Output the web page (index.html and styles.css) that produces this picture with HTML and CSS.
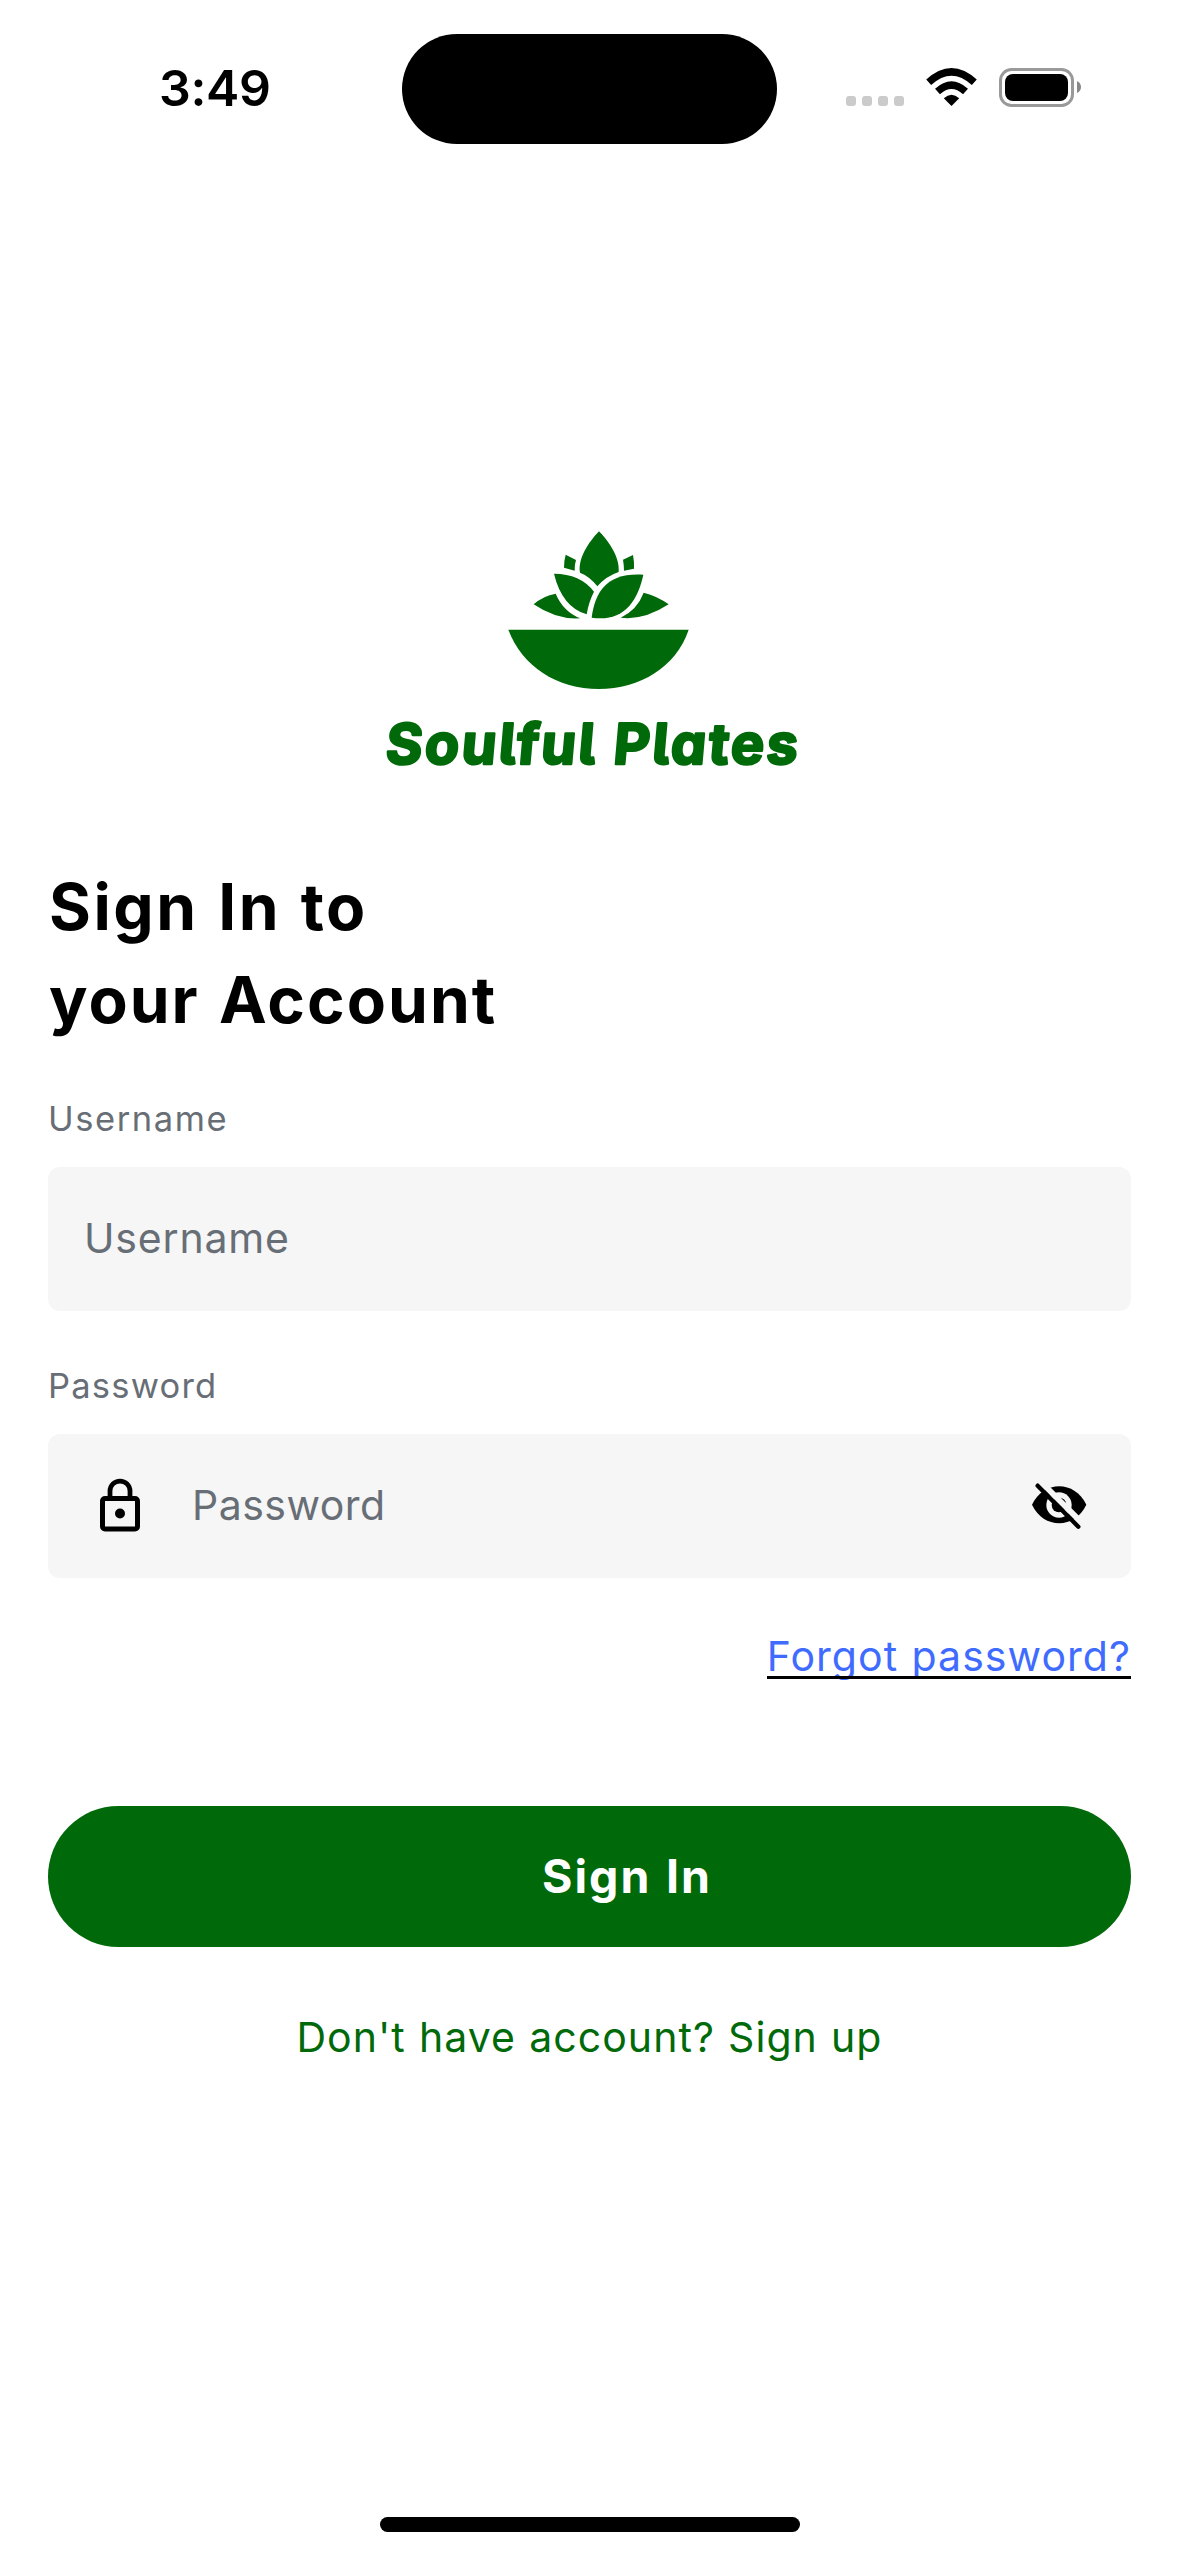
FILE: index.html
```
<!DOCTYPE html>
<html lang="en">
<head>
<meta charset="utf-8">
<title>Soulful Plates – Sign In</title>
<link rel="stylesheet" href="styles.css">
</head>
<body>
<div class="screen">
  <header class="status-bar">
    <span class="time">3:49</span>
    <div class="island"></div>
    <svg class="signals" viewBox="846 60 236 58" aria-hidden="true">
      <g fill="#cbcbcb">
        <rect x="846" y="96" width="10" height="10" rx="3"/>
        <rect x="862" y="96" width="10" height="10" rx="3"/>
        <rect x="878" y="96" width="10" height="10" rx="3"/>
        <rect x="894" y="96" width="10" height="10" rx="3"/>
      </g>
      <path d="M951.500 106L943.800 98.300Q951.500 91 959.200 98.300Z"/>
      <path d="M937.500 91.500Q951.500 78.700 965.500 91.500" fill="none" stroke="#000" stroke-width="7.300"/>
      <path d="M928.700 82.300Q951.500 61.400 974.300 82.300" fill="none" stroke="#000" stroke-width="7.300"/>
      <rect x="1000.500" y="69.500" width="72" height="36" rx="11" fill="none" stroke="#999" stroke-width="3"/>
      <rect x="1005" y="74" width="63" height="27" rx="8"/>
      <path d="M1077 81Q1081 83 1081 87T1077 93Z" fill="#888"/>
    </svg>
  </header>
  <main class="content">
    <svg class="logo" viewBox="360 510 459 280" role="img" aria-label="Soulful Plates">
      <g transform="translate(490 520) scale(.33333)">
        <path d="M327 34C308 54 262 108 270 158Q299 169 322 199Q349 168 386 156C391 108 348 55 327 34Z"/>
        <path d="M227 104L258 120Q253 136 254 152L222 143Q222 122 227 104Z"/>
        <path d="M429 105L399 119Q402 135 402 152L432 146Q433 124 429 105Z"/>
        <path d="M192 161Q271 161 312 215Q296 246 290 283Q216 261 192 161Z"/>
        <path d="M460 164C443 244 400 307 305 293C315 214 352 157 460 164Z"/>
        <path d="M131 253Q160 227 197 221Q220 275 271 295Q200 300 131 253Z"/>
        <path d="M536 253Q502 228 461 218Q442 269 392 293Q461 302 536 253Z"/>
        <path d="M55 329H596C559 440 450 507 326 507S97 440 55 329Z"/>
      </g>
      <text class="logo-name" transform="translate(384.500 764) skewX(-5)" textLength="412">Soulful Plates</text>
    </svg>
    <h1 class="title"><span class="title-lead">Sign In to</span><br>your Account</h1>
    <form class="form">
      <label class="label label-user">Username</label>
      <div class="field field-user"><span>Username</span></div>
      <label class="label label-pass">Password</label>
      <div class="field field-pass">
        <svg class="lock" viewBox="0 0 24 24" aria-hidden="true">
          <rect x="5" y="9" width="14" height="12.200" rx="1" fill="none" stroke="#000" stroke-width="2"/>
          <path d="M8 9V6a4 4 0 0 1 8 0V9" fill="none" stroke="#000" stroke-width="1.900"/>
          <circle cx="12" cy="15" r="2"/>
        </svg>
        <span class="field-text">Password</span>
        <svg class="eye" viewBox="0 0 270 216" aria-hidden="true">
          <path d="M51 104C85 30 180 30 214 104C180 178 85 178 51 104Z"/>
          <circle cx="132" cy="105" r="38" fill="#f6f6f6"/>
          <circle cx="132" cy="105" r="22"/>
          <path d="M78 36L205 163" stroke="#f6f6f6" stroke-width="18"/>
          <path d="M68 47L190 170" stroke="#000" stroke-width="13" stroke-linecap="round"/>
          <path d="M138 83Q149 88 154 99Z"/>
        </svg>
      </div>
      <a class="forgot">Forgot password?</a>
      <button class="submit" type="button">Sign In</button>
    </form>
    <a class="signup">Don't have account? Sign up</a>
  </main>
  <div class="home-indicator"></div>
</div>
</body>
</html>
```
FILE: styles.css
```
* { box-sizing: border-box; }

body {
  margin: 0;
  background: #fff;
  color: #000;
  font-family: Inter, "Liberation Sans", sans-serif;
}

.screen {
  display: flex;
  flex-direction: column;
  width: 1179px;
  height: 2556px;
  padding-bottom: 24px;
}

.status-bar {
  display: flex;
  align-items: center;
  height: 178px;
  padding-left: 159px;
}

.time {
  width: 243px;
  padding-bottom: 2px;
  font-size: 50px;
  font-weight: 600;
  line-height: 60px;
  letter-spacing: -0.35px;
}

.island {
  width: 375px;
  height: 110px;
  border-radius: 55px;
  background: #000;
}

.signals {
  width: 236px;
  height: 58px;
  margin-left: 69px;
}

.content {
  display: flex;
  flex-direction: column;
  padding: 332px 48px 0;
}

.logo {
  align-self: center;
  width: 459px;
  height: 280px;
  fill: #006909;
}

.logo-name {
  font: 650 56px Inter, "Open Sans", sans-serif;
  font-feature-settings: "cv11", "cv05";
  stroke: #006909;
  stroke-width: 2.5px;
  stroke-linejoin: round;
}

.title {
  margin: 70px 0 0;
  padding-left: 1px;
  font-size: 64px;
  font-weight: 700;
  line-height: 93px;
  letter-spacing: 2.05px;
  word-spacing: 2px;
}

.title-lead {
  letter-spacing: 2.5px;
}

.form {
  display: flex;
  flex-direction: column;
}

.label {
  margin-bottom: 26.5px;
  color: #686e76;
  font-size: 34.5px;
  line-height: 44px;
}

.label-user {
  margin-top: 50.5px;
  letter-spacing: 1.57px;
}

.label-pass {
  margin-top: 52.5px;
  letter-spacing: 1.21px;
}

.field {
  display: flex;
  align-items: center;
  height: 144px;
  border-radius: 12px;
  background: #f6f6f6;
  color: #686e76;
  font-size: 41px;
}

.field-user {
  padding: 0 36px 2px;
  letter-spacing: 0.82px;
}

.field-pass {
  gap: 42px;
  padding: 0 26px 0 42px;
  letter-spacing: 0.48px;
}

.field-text {
  flex: 1;
  padding-bottom: 2px;
}

.lock {
  width: 60px;
  height: 60px;
}

.eye {
  width: 90px;
  height: 72px;
}

.forgot {
  position: relative;
  align-self: flex-end;
  margin-top: 55px;
  height: 46px;
  color: #406bff;
  font-size: 41px;
  line-height: 47px;
  letter-spacing: 1.05px;
  word-spacing: 0.8px;
}

.forgot::after {
  content: "";
  position: absolute;
  inset: auto 0 0;
  height: 3px;
  background: #000;
}

.submit {
  height: 141px;
  margin-top: 127px;
  padding: 0 0 2px 75px;
  border: 0;
  border-radius: 71px;
  background: #006909;
  color: #fff;
  font: 650 46.5px Inter, sans-serif;
  letter-spacing: 2px;
  word-spacing: 1.5px;
}

.signup {
  align-self: center;
  margin-top: 65px;
  color: #006909;
  font-size: 41px;
  line-height: 50px;
  letter-spacing: 1.05px;
  word-spacing: 0.6px;
}

.home-indicator {
  align-self: center;
  width: 420px;
  height: 15px;
  margin-top: auto;
  border-radius: 8px;
  background: #000;
}
```
